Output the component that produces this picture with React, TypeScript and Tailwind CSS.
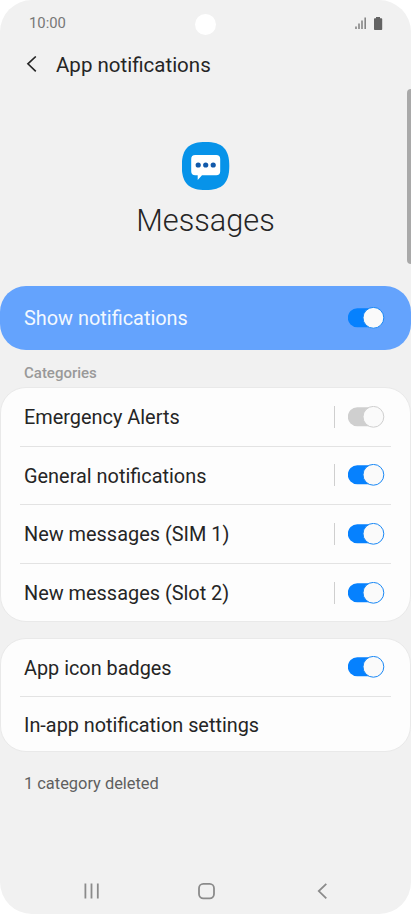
import { useState } from 'react';

interface ToggleProps {
  label: string;
  checked: boolean;
  disabled?: boolean;
  onChange: () => void;
}

function Toggle({ label, checked, disabled, onChange }: ToggleProps) {
  return (
    <button
      role="switch"
      aria-checked={checked}
      aria-label={label}
      disabled={disabled}
      onClick={onChange}
      className="block h-[22px] w-[37px] shrink-0"
    >
      <svg width="37" height="22" viewBox="0 0 37 22">
        <rect x="-0.2" y="1.2" width="34" height="19" rx="9.5" fill={checked ? '#0681fe' : '#cfcfcf'} />
        <circle
          cx="25.4"
          cy="10.8"
          r="10.4"
          fill="#fafafa"
          stroke={checked ? '#1a88f5' : '#cfcfcf'}
          strokeWidth="1"
        />
      </svg>
    </button>
  );
}

interface Category {
  name: string;
  enabled: boolean;
  locked?: boolean;
}

const initialCategories: Category[] = [
  { name: 'Emergency Alerts', enabled: false, locked: true },
  { name: 'General notifications', enabled: true },
  { name: 'New messages (SIM 1)', enabled: true },
  { name: 'New messages (Slot 2)', enabled: true },
];

function StatusBar() {
  return (
    <div className="flex h-[46px] items-center justify-between pl-[29px] pr-[28px]">
      <span className="w-[60px] pt-px text-[14.8px] text-[#777]">10:00</span>
      <span className="mr-[2px] mt-[2px] size-[21px] rounded-full bg-white" />
      <span className="flex w-[60px] items-center justify-end gap-[7px]">
        <svg width="12" height="12" viewBox="0 0 12 12" fill="#858585">
          <rect x="0.2" y="9.5" width="1.6" height="2.5" />
          <rect x="3.2" y="6.5" width="1.6" height="5.5" />
          <rect x="6.2" y="3.5" width="1.6" height="8.5" />
          <rect x="9.4" y="0.5" width="1.6" height="11.5" />
        </svg>
        <svg width="9" height="13" viewBox="0 0 9 13" fill="#636363">
          <path d="M2 0h4v1.3h1.4a.8.8 0 0 1 .8.8v10.1a.8.8 0 0 1-.8.8H.8a.8.8 0 0 1-.8-.8V2.1a.8.8 0 0 1 .8-.8H2z" />
        </svg>
      </span>
    </div>
  );
}

function MessagesIcon() {
  return (
    <svg width="48" height="48" viewBox="0 0 48 48">
      <path
        d="M23.5 0C40.5 0 47.3 7 47.3 24S40.5 48 23.5 48-.2 41-.2 24 6.5 0 23.5 0z"
        fill="#0793e9"
      />
      <path
        d="M13.2 13h21a4 4 0 0 1 4 4v12.2a4 4 0 0 1-4 4H20L15.7 38v-4.8h-2.5a4 4 0 0 1-4-4V17a4 4 0 0 1 4-4z"
        fill="#fff"
      />
      <circle cx="16.2" cy="23" r="2.6" fill="#1159aa" />
      <circle cx="23.7" cy="23" r="2.6" fill="#1159aa" />
      <circle cx="31.2" cy="23" r="2.6" fill="#1159aa" />
    </svg>
  );
}

export default function App() {
  const [showAll, setShowAll] = useState(true);
  const [badges, setBadges] = useState(true);
  const [categories, setCategories] = useState(initialCategories);

  const toggleCategory = (index: number) => {
    setCategories(categories.map((c, i) => (i === index ? { ...c, enabled: !c.enabled } : c)));
  };

  return (
    <div className="h-[914px] w-[411px] bg-white font-['Roboto',sans-serif] text-[#252525]">
      <div className="relative flex h-full flex-col overflow-hidden rounded-[32px] bg-[#f1f1f1]">
        <StatusBar />

        <header className="flex h-[36px] items-center pl-[26px]">
          <button aria-label="Back" className="w-[30px]">
            <svg width="11" height="17" viewBox="0 0 11 17" fill="none" stroke="#252525" strokeWidth="1.6">
              <path d="M9.8.5 1.9 7.8l7.9 7.5" />
            </svg>
          </button>
          <h1 className="pt-[2px] text-[20.5px]">App notifications</h1>
        </header>

        <section className="flex h-[204px] flex-col items-center pt-[60px]">
          <MessagesIcon />
          <h2 className="mt-[11px] text-[30.7px] font-light leading-[40px]">Messages</h2>
        </section>

        <div className="flex h-[64px] shrink-0 items-center justify-between rounded-[26px] bg-[#64a3fd] pl-6 pr-[26px] text-[19.9px] text-[#f2f8ff]">
          <span className="pt-[2px]">Show notifications</span>
          <Toggle label="Show notifications" checked={showAll} onChange={() => setShowAll(!showAll)} />
        </div>

        <h3 className="flex h-[37px] shrink-0 items-center pl-6 pt-[9px] text-[15px] font-medium text-[#999]">
          Categories
        </h3>

        <ul className="h-[235px] shrink-0 rounded-[26px] border border-[#e9e9e9] bg-[#fdfdfd] px-[19px]">
          {categories.map((category, i) => (
            <li
              key={category.name}
              className="flex h-[58.5px] items-center justify-between border-b border-[#e3e3e3] pl-1 pr-[6px] text-[19.9px] last:border-b-0"
            >
              <span className="pt-[3px]">{category.name}</span>
              <span className="flex items-center gap-[13px]">
                <span className="h-[22px] w-px bg-[#cfcfcf]" />
                <Toggle
                  label={category.name}
                  checked={category.enabled}
                  disabled={category.locked}
                  onChange={() => toggleCategory(i)}
                />
              </span>
            </li>
          ))}
        </ul>

        <ul className="mt-4 h-[114px] shrink-0 rounded-[26px] border border-[#e9e9e9] bg-[#fdfdfd] px-[19px] text-[19.85px]">
          <li className="flex h-[58px] items-center justify-between border-b border-[#e3e3e3] pb-px pl-1 pr-[6px]">
            <span className="pt-[3px]">App icon badges</span>
            <Toggle label="App icon badges" checked={badges} onChange={() => setBadges(!badges)} />
          </li>
          <li className="flex h-[57px] items-center pl-1">In-app notification settings</li>
        </ul>

        <p className="mt-5 pl-6 text-[16.4px] leading-6 text-[#5f5f5f]">1 category deleted</p>

        <nav className="mt-auto flex h-[46px] items-center pl-[83px]">
          <button aria-label="Recent apps">
            <svg width="17" height="17" viewBox="0 0 17 17" stroke="#8b8b8b" strokeWidth="1.8">
              <path d="M2.4.6v15M8.5.6v15M14.8.6v15" />
            </svg>
          </button>
          <button aria-label="Home" className="ml-[98px]">
            <svg width="17" height="17" viewBox="0 0 17 17" fill="none" stroke="#8b8b8b" strokeWidth="1.8">
              <rect x="1" y="0.9" width="15" height="14.5" rx="4.3" />
            </svg>
          </button>
          <button aria-label="Back" className="ml-[101px]">
            <svg width="11" height="17" viewBox="0 0 11 17" fill="none" stroke="#8b8b8b" strokeWidth="1.8">
              <path d="M10.3.9 2.8 8.1l7.5 7.2" />
            </svg>
          </button>
        </nav>

        <div className="absolute right-0 top-[89px] h-[175px] w-1 rounded-l-full bg-[#a9a9a9]" />
      </div>
    </div>
  );
}
